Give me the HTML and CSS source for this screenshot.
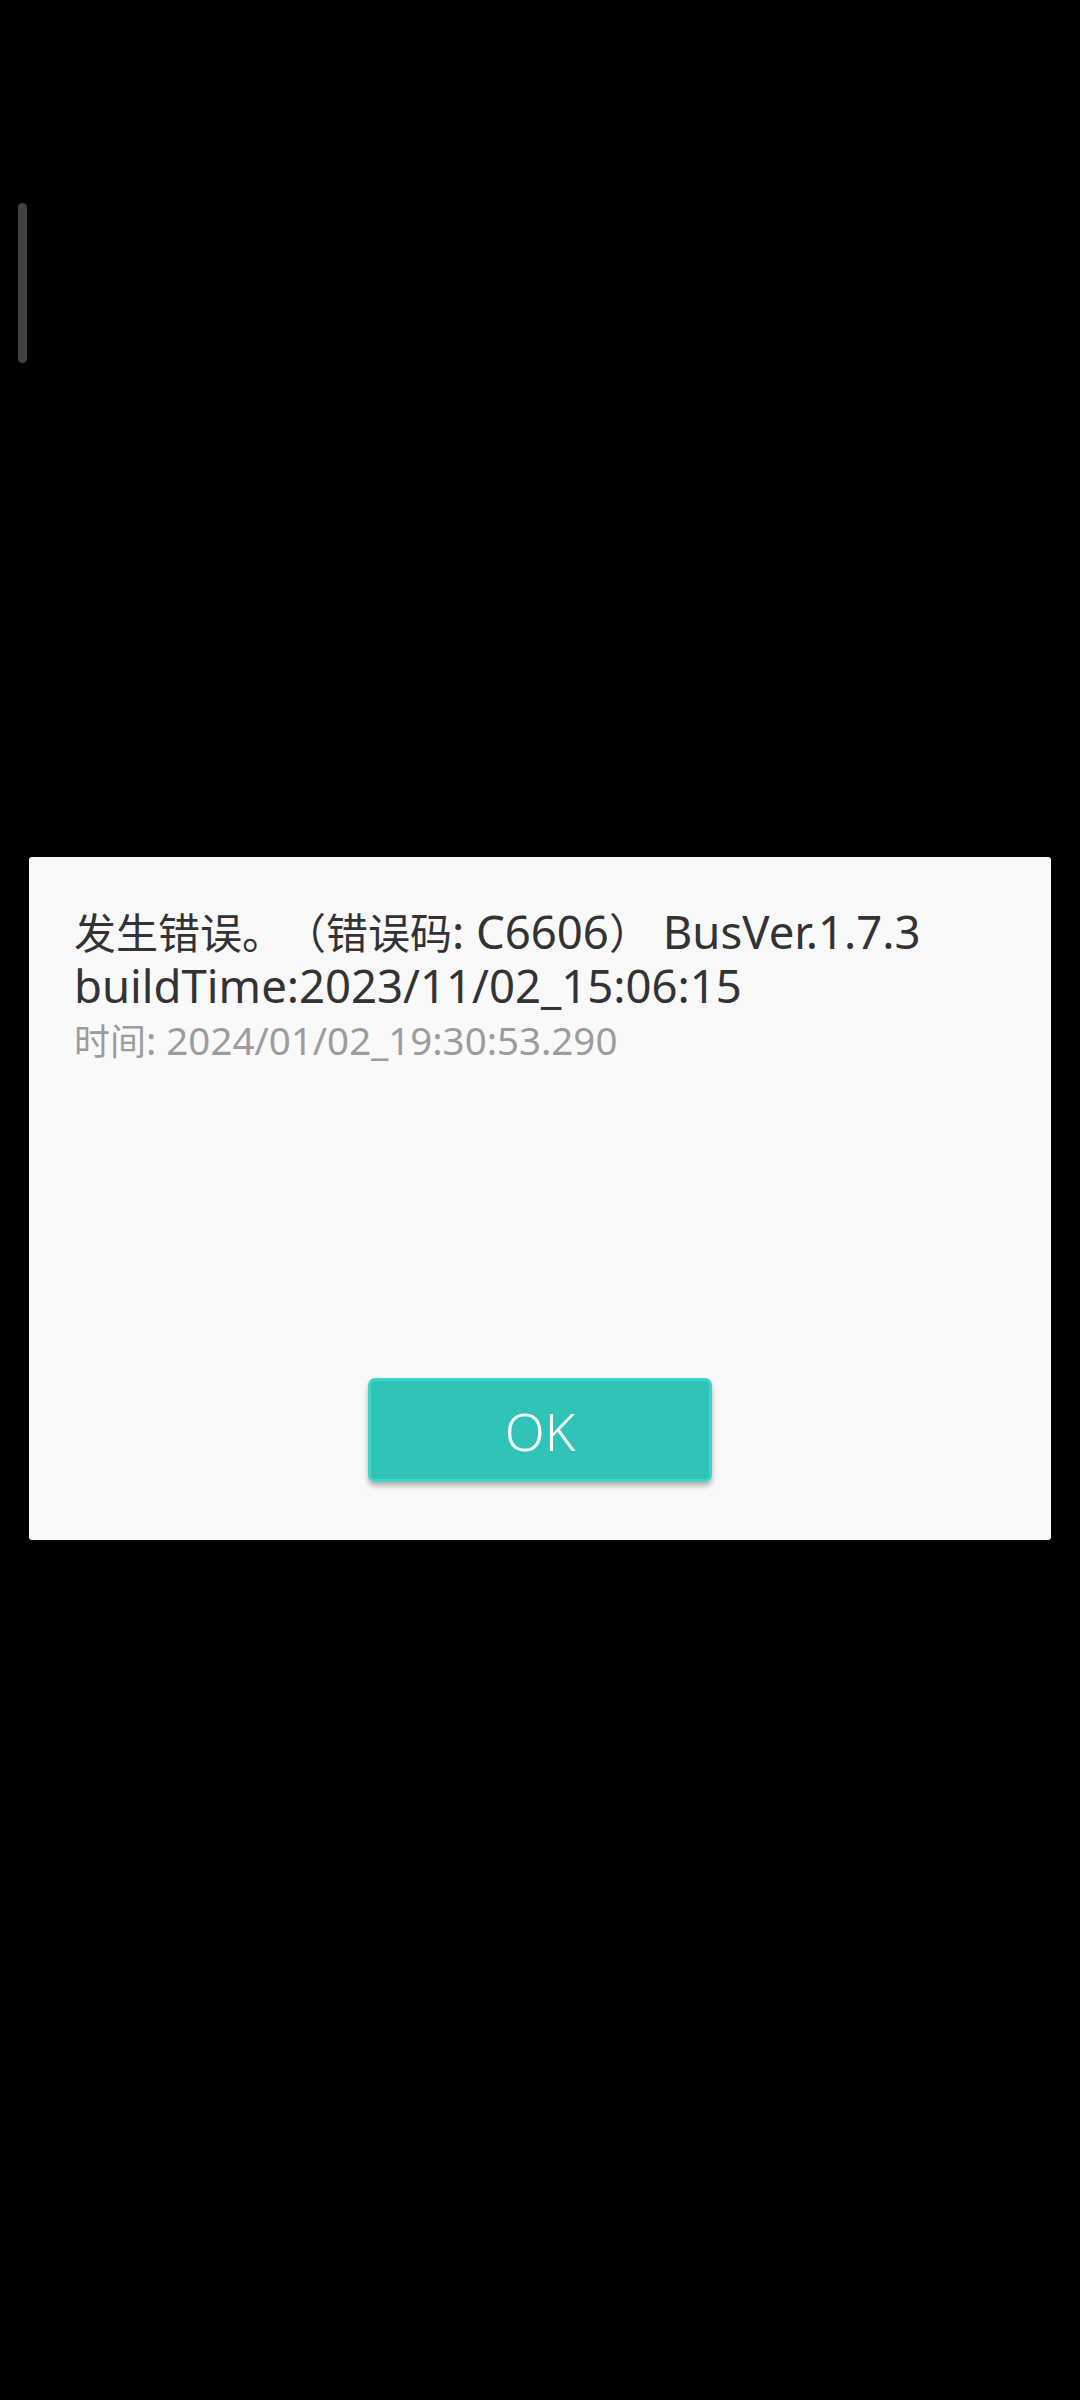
FILE: index.html
```html
<!DOCTYPE html>
<html lang="zh-CN">
<head>
<meta charset="utf-8">
<title>错误</title>
<link rel="stylesheet" href="styles.css">
</head>
<body>
<div class="screen">
  <div class="scroll-thumb"></div>
  <div class="dialog">
    <div class="message">
      <div class="line line-main"><span class="cjk">发生错误。（错误码</span>: C6606<span class="cjk">）</span> BusVer.1.7.3</div>
      <div class="line line-build">buildTime:2023/11/02_15:06:15</div>
      <div class="line line-time"><span class="cjk">时间</span>: 2024/01/02_19:30:53.290</div>
    </div>
    <div class="actions">
      <button class="ok-button">OK</button>
    </div>
  </div>
</div>
</body>
</html>
```

FILE: styles.css
```css
html, body {
  margin: 0;
  padding: 0;
  background: #000000;
}

.screen {
  position: relative;
  width: 1080px;
  height: 2400px;
  background: #000000;
  padding-top: 857px;
  box-sizing: border-box;
}

.scroll-thumb {
  position: absolute;
  left: 18px;
  top: 203px;
  width: 9px;
  height: 160px;
  border-radius: 5px;
  background: #414141;
}

.dialog {
  margin-left: 29px;
  width: 1022px;
  height: 683px;
  background: #faf9fa;
  border-radius: 3px;
  display: flex;
  flex-direction: column;
  justify-content: space-between;
  box-sizing: border-box;
  padding: 47px 0 58px 0;
}

.message {
  padding-left: 45px;
  font-family: "Noto Sans", "Noto Sans CJK SC", sans-serif;
  font-weight: 400;
  color: #333333;
  text-spacing-trim: space-all;
}

.line {
  white-space: nowrap;
}

.cjk {
  font-family: "Noto Sans CJK SC", sans-serif;
  font-weight: 400;
}

.line-main,
.line-build {
  font-size: 45.5px;
  line-height: 54px;
}

.line-main .cjk {
  font-size: 42px;
}

.line-time {
  font-size: 38.5px;
  line-height: 55px;
  color: #9c9c9c;
}

.line-time .cjk {
  font-size: 36px;
}

.actions {
  display: flex;
  justify-content: center;
}

.ok-button {
  width: 344px;
  height: 104px;
  box-sizing: border-box;
  border: 3px solid #3ed6ca;
  border-radius: 7px;
  background: #2fc4b7;
  color: #ffffff;
  font-family: "Noto Sans", sans-serif;
  font-weight: 300;
  font-size: 52px;
  padding: 0;
  box-shadow: 0 4px 5px rgba(0, 0, 0, 0.28);
}
```
